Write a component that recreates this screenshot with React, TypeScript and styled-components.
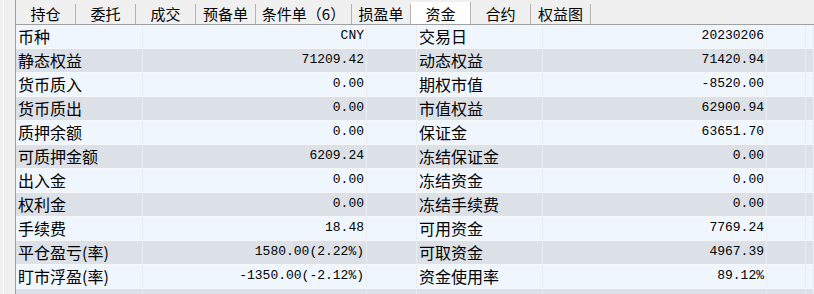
import styled, { createGlobalStyle } from 'styled-components';

const GlobalStyle = createGlobalStyle`
  html, body {
    margin: 0;
    padding: 0;
    background: #f0f0f0;
  }
`;

const tabs = [
  { label: '持仓', width: 60 },
  { label: '委托', width: 60 },
  { label: '成交', width: 60 },
  { label: '预备单', width: 60 },
  { label: '条件单（6）', width: 96 },
  { label: '损盈单', width: 59 },
  { label: '资金', width: 60, active: true },
  { label: '合约', width: 60 },
  { label: '权益图', width: 60 },
];

const rows: [string, string, string, string][] = [
  ['币种', 'CNY', '交易日', '20230206'],
  ['静态权益', '71209.42', '动态权益', '71420.94'],
  ['货币质入', '0.00', '期权市值', '-8520.00'],
  ['货币质出', '0.00', '市值权益', '62900.94'],
  ['质押余额', '0.00', '保证金', '63651.70'],
  ['可质押金额', '6209.24', '冻结保证金', '0.00'],
  ['出入金', '0.00', '冻结资金', '0.00'],
  ['权利金', '0.00', '冻结手续费', '0.00'],
  ['手续费', '18.48', '可用资金', '7769.24'],
  ['平仓盈亏(率)', '1580.00(2.22%)', '可取资金', '4967.39'],
  ['盯市浮盈(率)', '-1350.00(-2.12%)', '资金使用率', '89.12%'],
  ['', '', '', ''],
];

export default function App() {
  return (
    <Page>
      <GlobalStyle />
      <SideStrip />
      <Main>
        <TabBar>
          {tabs.map((t) => (
            <Tab key={t.label} $width={t.width} $active={!!t.active}>
              <TabLabel>{t.label}</TabLabel>
            </Tab>
          ))}
        </TabBar>
        <Table>
          {rows.map((r, i) => (
            <Row key={i} $alt={i % 2 === 1}>
              <LabelCell>{r[0]}</LabelCell>
              <ValueCell>{r[1]}</ValueCell>
              <Cell />
              <LabelCell>{r[2]}</LabelCell>
              <ValueCell>{r[3]}</ValueCell>
              <Cell />
              <Cell />
            </Row>
          ))}
        </Table>
      </Main>
    </Page>
  );
}

const Page = styled.div`
  display: flex;
  width: 814px;
  height: 294px;
  overflow: hidden;
  background: #f0f0f0;
  font-family: 'Noto Sans CJK SC', 'Liberation Sans', sans-serif;
  color: #000;
`;

const SideStrip = styled.div`
  width: 15px;
  flex-shrink: 0;
  box-sizing: border-box;
  border-left: 3px solid #f0f0f0;
  background: linear-gradient(to right, #fbfbfb 0 1px, #f0f0f0 1px);
`;

const Main = styled.div`
  flex: 1;
  display: flex;
  flex-direction: column;
  min-width: 0;
  overflow: hidden;
`;

const TabBar = styled.div`
  flex: 0 0 25px;
  display: flex;
  padding-top: 2px;
  box-sizing: border-box;
  overflow: hidden;
  border-bottom: 1px solid #a0a0a0;
  border-left: 1px solid #a0a0a0;
`;

const Tab = styled.div<{ $width: number; $active: boolean }>`
  width: ${(p) => p.$width}px;
  height: ${(p) => (p.$active ? '22px' : '20px')};
  margin-top: ${(p) => (p.$active ? '0' : '2px')};
  box-sizing: border-box;
  display: flex;
  align-items: center;
  justify-content: center;
  padding-top: ${(p) => (p.$active ? '2px' : '0')};
  border-right: 1px solid #b4b4b4;
  background: ${(p) => (p.$active ? '#ffffff' : 'transparent')};
`;

const TabLabel = styled.span`
  font-size: 15px;
  line-height: 16px;
`;

const Table = styled.div`
  flex: 0 0 auto;
  border-left: 1px solid #a0a0a0;
  display: flex;
  flex-direction: column;
`;

const Row = styled.div<{ $alt: boolean }>`
  display: grid;
  grid-template-columns: 127px 224px 50px 126px 224px 39px 1fr;
  height: 24px;
  flex-shrink: 0;
  box-sizing: border-box;
  border-bottom: 1px solid #f5f7fa;
  background: ${(p) => (p.$alt ? '#dce1e8' : '#eff6fe')};
`;

const Cell = styled.div`
  box-sizing: border-box;
  border-right: 1px solid #e9edf2;
  display: flex;
  align-items: center;
  padding-bottom: 2px;
  white-space: nowrap;
  line-height: 1;
`;

const LabelCell = styled(Cell)`
  padding-left: 2px;
  font-size: 16px;
`;

const ValueCell = styled(Cell)`
  justify-content: flex-end;
  padding-right: 2px;
  font-family: 'Liberation Mono', 'DejaVu Sans Mono', monospace;
  font-size: 13px;
`;
